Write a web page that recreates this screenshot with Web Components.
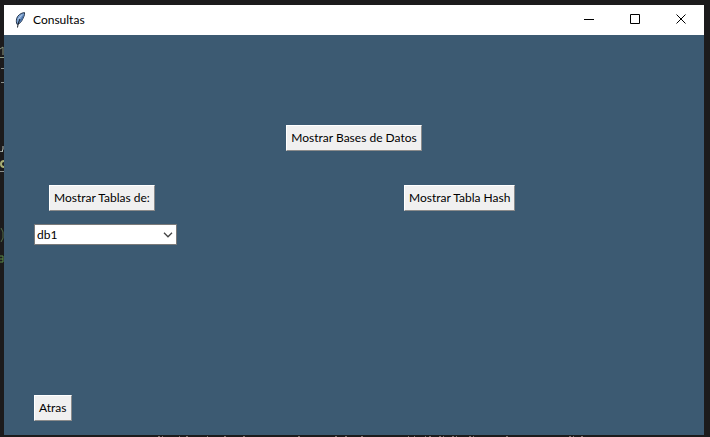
<!DOCTYPE html>
<html lang="es">
<head>
<meta charset="utf-8">
<title>Consultas</title>
<style>
html, body { height: 100%; }
body { margin: 0; background: #1c1b1c; font: 12px/16px Lato, "Open Sans", sans-serif; color: #000; overflow: hidden; }
</style>
</head>
<body>
<desk-top>
  <app-window heading="Consultas">
    <query-panel></query-panel>
  </app-window>
</desk-top>
<script>
const define = (name, html, setup) => customElements.define(name, class extends HTMLElement {
  connectedCallback() {
    if (this.shadowRoot) return;
    const t = document.createElement('template');
    t.innerHTML = html;
    this.attachShadow({ mode: 'open' }).append(t.content.cloneNode(true));
    if (setup) setup(this, this.shadowRoot);
  }
});

/* Editor surface behind the window, with the edges of its code showing */
define('desk-top', `
<style>
:host { display: flex; box-sizing: border-box; height: 100vh; padding: 5px 6px 2px 4px; position: relative; }
::slotted(*) { flex: 1; min-width: 0; }
svg { position: absolute; left: 0; fill: none; }
.left { top: 30px; }
.bottom { bottom: 0; left: 150px; }
</style>
<svg class="left" width="4" height="240" aria-hidden="true">
  <path d="M0 19l3-2v8M0 27.500h4" stroke="#8d9a83"/>
  <path d="M1 38.500h3M1 52.500h3M0 121.500h3M0 141.500h4" stroke="#8b908c"/>
  <path d="M3 116v3l-1 3" stroke="#b8c2bb"/>
  <path d="M4 131q-3 0-3 3t3 3" stroke="#a7ae75" stroke-width="2"/>
  <path d="M1 198l2 4v6l-2 4" stroke="#506b48"/>
  <path d="M0 226h3v6H0M0 229h3" stroke="#5b8a49"/>
</svg>
<svg class="bottom" width="440" height="1" aria-hidden="true">
  <path d="M8 0h2m2 0h1m16 0h1m6 0h2m19 0h1m16 0h2m17 0h2m53 0h2m35 0h2m8 0h2m14 0h2m45 0h1m5 0h1m10 0h1m3 0h2m8 0h2m2 0h1m8 0h2m2 0h1m12 0h2m2 0h1m32 0h2m61 0h2m2 0h1m7 0h2m7 0h2" stroke="#817571" stroke-width="2"/>
</svg>
<slot></slot>
`);

define('app-window', `
<style>
:host { display: flex; flex-direction: column; background: #3c5a72; }
header { display: flex; align-items: center; height: 30px; background: #fff; }
.feather { margin: 0 6px 0 10px; flex: none; }
h1 { flex: 1; margin: 0; font: inherit; }
::slotted(*) { flex: 1; }
</style>
<header>
  <svg class="feather" width="13" height="16" viewBox="0 0 13 16" aria-hidden="true">
    <path d="M10.500 .6C7 .9 3.400 3.300 2.600 6.700c-.4 2-.3 4.300.4 5.600 2.600-.5 4.300-2.200 5.300-4.500 1.200-2.500 2.700-4.900 2.200-7.200z" fill="#7ba0cf" stroke="#26364c"/>
    <path d="M9.800 2.500C8.300 4.500 6.500 7 5 11 7.500 9.500 9.300 6.500 9.800 2.500z" fill="#4870a8"/>
    <path d="M6 7C4.800 9.500 4 12 3.500 15.500" stroke="#101820" fill="none"/>
    <path d="M7.800 2.800L4.300 7" stroke="#b5cbe8" fill="none"/>
  </svg>
  <h1></h1>
  <window-button kind="min" label="Minimizar"></window-button>
  <window-button kind="max" label="Maximizar"></window-button>
  <window-button kind="close" label="Cerrar"></window-button>
</header>
<slot></slot>
`, (el, root) => { root.querySelector('h1').textContent = el.getAttribute('heading'); });

const glyphs = {
  min: 'M0 5.500h10',
  max: 'M.5 .5h9v9h-9z',
  close: 'M.5 .5l9 9M9.500 .5l-9 9'
};
define('window-button', `
<style>
:host { display: block; }
button { display: grid; place-items: center; width: 46px; height: 30px; margin: 0; padding: 0 0 2px; border: 0; background: none; }
path { fill: none; stroke: #000; }
</style>
<button type="button"><svg width="10" height="10" viewBox="0 0 10 10" aria-hidden="true"><path/></svg></button>
`, (el, root) => {
  root.querySelector('path').setAttribute('d', glyphs[el.getAttribute('kind')]);
  root.querySelector('button').setAttribute('aria-label', el.getAttribute('label'));
});

define('tk-button', `
<style>
:host { display: block; width: max-content; }
button { display: block; margin: 0; padding: 4px; font: inherit; color: #000; background: #f0f0f0; border: 1px solid; border-color: #fff #8b8b8b #8b8b8b #fff; white-space: nowrap; }
</style>
<button type="button"><slot></slot></button>
`);

define('tk-combobox', `
<style>
:host { display: grid; width: 143px; }
select, svg { grid-area: 1 / 1; }
select { appearance: none; width: 100%; height: 21px; margin: 0; padding: 0 20px 0 2px; font: inherit; color: #000; background: #fff; border: 1px solid #7a7a7a; border-radius: 0; }
svg { justify-self: end; align-self: center; margin-right: 4px; pointer-events: none; }
</style>
<select aria-label="Base de datos"><option>db1</option></select>
<svg width="10" height="6" viewBox="0 0 10 6" aria-hidden="true"><path d="M1 .8l4 4 4-4" fill="none" stroke="#444" stroke-width="1.300"/></svg>
`);

define('query-panel', `
<style>
:host { display: flex; flex-direction: column; padding: 90px 30px 14px; }
.top { align-self: center; }
.row { display: grid; grid-template-columns: 1fr 1fr; margin: 34px 0 13px; }
.row :first-child { margin-left: 15px; }
.row :last-child { margin-left: 50px; }
.back { margin-top: auto; }
</style>
<tk-button class="top">Mostrar Bases de Datos</tk-button>
<div class="row">
  <tk-button>Mostrar Tablas de:</tk-button>
  <tk-button>Mostrar Tabla Hash</tk-button>
</div>
<tk-combobox></tk-combobox>
<tk-button class="back">Atras</tk-button>
`);
</script>
</body>
</html>
